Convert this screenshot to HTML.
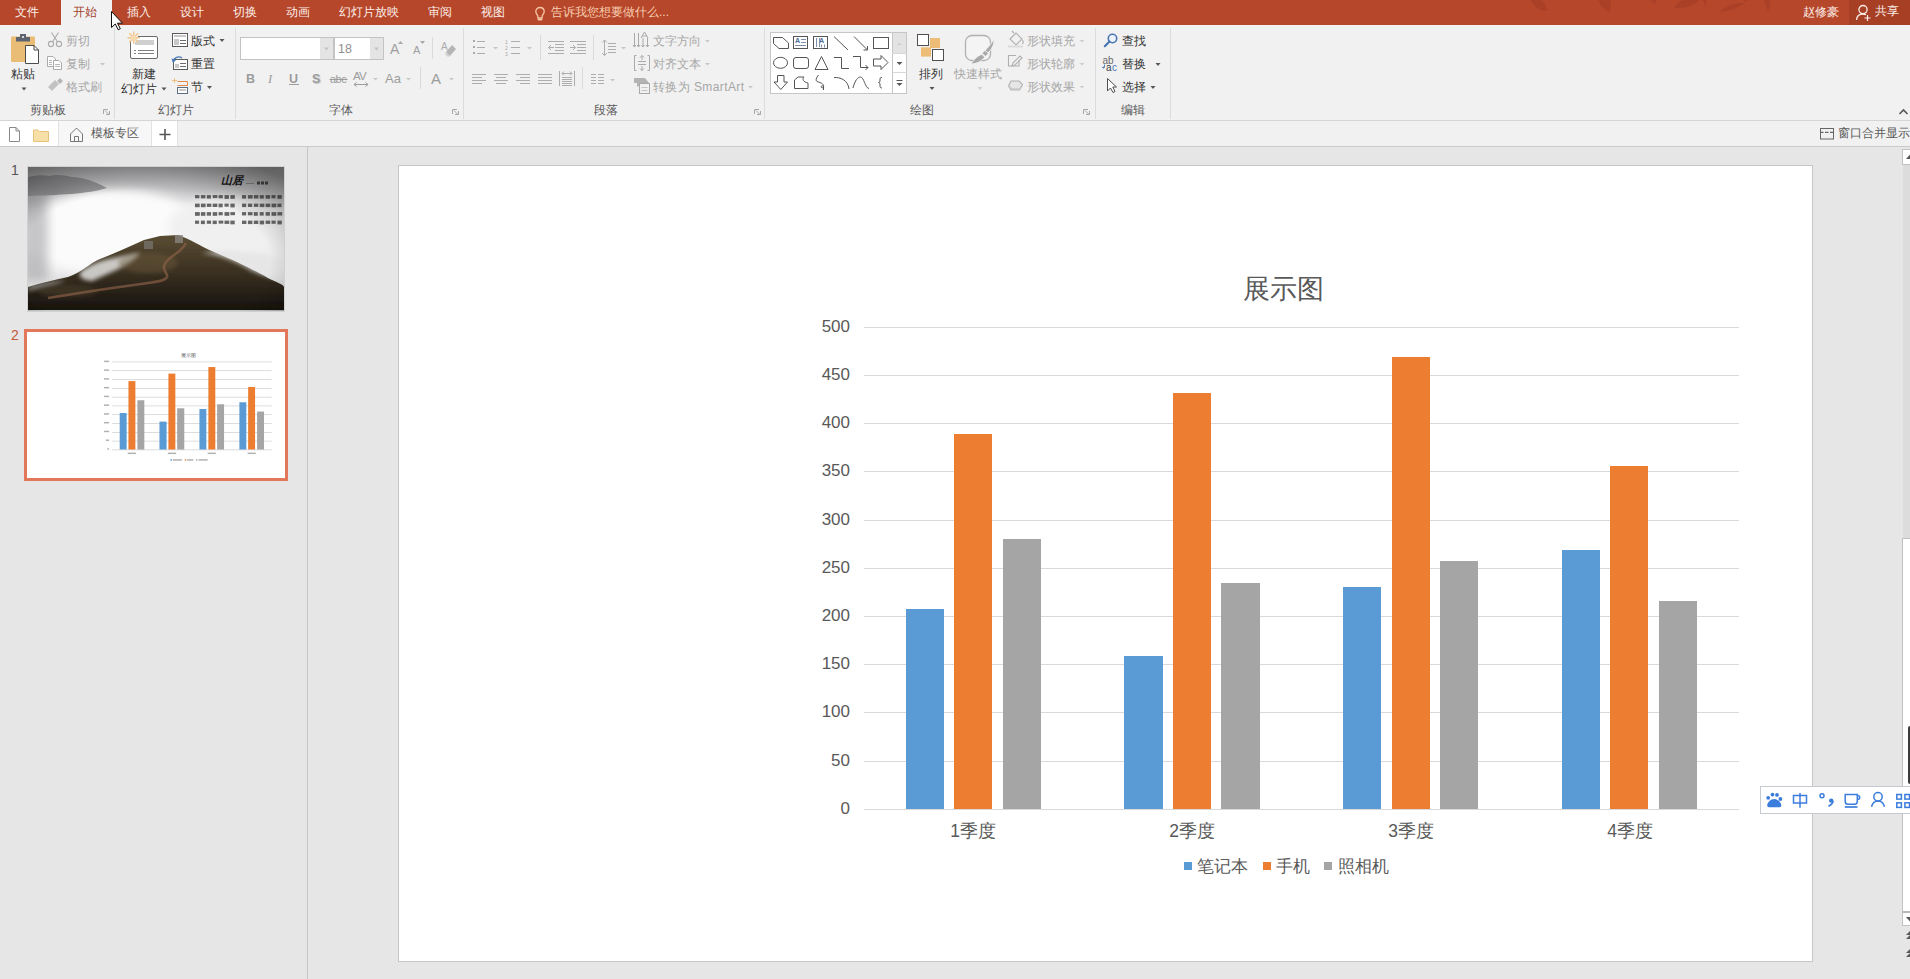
<!DOCTYPE html>
<html><head><meta charset="utf-8">
<style>
*{margin:0;padding:0;box-sizing:border-box}
html,body{width:1910px;height:979px;overflow:hidden;background:#e6e6e6;font-family:"Liberation Sans",sans-serif;position:relative}
.a{position:absolute}
.t{position:absolute;white-space:nowrap;line-height:1}
#title{left:0;top:0;width:1910px;height:25px;background:#b7472a;overflow:hidden}
.tab{position:absolute;top:6px;font-size:12px;color:#fbeee9;line-height:12px;white-space:nowrap}
#ribbon{left:0;top:25px;width:1910px;height:96px;background:#f1f1f1;border-bottom:1px solid #d5d5d5}
.glab{position:absolute;top:104px;font-size:12px;color:#5a5a5a;line-height:12px;white-space:nowrap}
.en{color:#333}
.dis{color:#a6a6a6}
.rt{position:absolute;font-size:12px;line-height:12px;white-space:nowrap}
.ylab{position:absolute;width:60px;text-align:right;font-size:17px;color:#595959;line-height:18px}
.xlab{position:absolute;width:100px;text-align:center;font-size:17.5px;color:#595959;line-height:18px}
.grid{position:absolute;left:864px;width:875px;height:1px;background:#d9d9d9}
.bar{position:absolute;width:38px}
.b1{background:#5b9bd5}.b2{background:#ed7d31}.b3{background:#a5a5a5}

</style></head><body>
<div id="title" class="a">
  <svg class="a" style="left:0;top:0" width="1910" height="25">
    <g fill="#a83f27" opacity="0.85">
      <path d="M1531 0 C1533 6 1540 12 1548 11 C1546 6 1544 2 1541 0Z"/>
      <path d="M1598 0 C1600 5 1604 10 1609 12 C1611 8 1612 3 1610 0Z"/>
      <path d="M1651 0 L1655 5 L1656 0Z"/>
      <path d="M1674 8 C1682 9 1694 6 1700 0 L1682 0 C1678 3 1675 5 1674 8Z"/>
      <path d="M1702 0 L1707 7 L1706 0Z"/>
      <path d="M1720 12 C1730 11 1740 7 1745 3 C1735 3 1725 6 1720 12Z"/>
      <path d="M1745 2 L1748 0 L1744 0Z"/>
      <path d="M1764 0 C1765 5 1767 9 1768 12 C1770 8 1771 3 1770 0Z"/>
    </g>
  </svg>
  <div class="a" style="left:61px;top:0;width:51px;height:25px;background:#f1f1f1"></div>
  <div class="tab" style="left:15px">文件</div>
  <div class="tab" style="left:73px;color:#a1432d">开始</div>
  <div class="tab" style="left:127px">插入</div>
  <div class="tab" style="left:180px">设计</div>
  <div class="tab" style="left:233px">切换</div>
  <div class="tab" style="left:286px">动画</div>
  <div class="tab" style="left:339px">幻灯片放映</div>
  <div class="tab" style="left:428px">审阅</div>
  <div class="tab" style="left:481px">视图</div>
  <svg class="a" style="left:533px;top:4px" width="14" height="18">
    <path d="M7 3.5 C4.5 3.5 2.8 5.3 2.8 7.6 C2.8 9.4 4 10.5 4.8 11.8 V13.8 H9.2 V11.8 C10 10.5 11.2 9.4 11.2 7.6 C11.2 5.3 9.5 3.5 7 3.5Z" fill="none" stroke="#f5c6a5" stroke-width="1.3"/>
    <rect x="4.6" y="14.2" width="4.8" height="2.3" rx="1" fill="#f5c6a5"/>
  </svg>
  <div class="tab" style="left:551px;color:#f6cdb0">告诉我您想要做什么...</div>
  <div class="tab" style="left:1803px">赵修豪</div>
  <div class="a" style="left:1849px;top:0;width:61px;height:25px;background:#a63f24"></div>
  <svg class="a" style="left:1854px;top:3px" width="20" height="20">
    <circle cx="9" cy="6.6" r="4.1" fill="none" stroke="#fbeee9" stroke-width="1.3"/>
    <path d="M2.5 17 C2.8 13.5 5 11 9 11 C10.3 11 11.2 11.3 12 11.8" fill="none" stroke="#fbeee9" stroke-width="1.3"/>
    <path d="M13.5 12 V18 M10.5 15 H16.5" stroke="#fbeee9" stroke-width="1.2"/>
  </svg>
  <div class="tab" style="left:1875px;top:5px">共享</div>
</div>

<div id="ribbon" class="a"></div>
<svg class="a" style="left:0;top:0" width="1910" height="147" viewBox="0 0 1910 147">
<!-- group separators -->
<g fill="#dcdcdc">
<rect x="114" y="28" width="1" height="91"/>
<rect x="235" y="28" width="1" height="91"/>
<rect x="463" y="28" width="1" height="91"/>
<rect x="764" y="28" width="1" height="91"/>
<rect x="1095" y="28" width="1" height="91"/>
<rect x="1170" y="28" width="1" height="91"/>
</g>
<!-- dialog launchers -->
<g fill="none" stroke="#a8a8a8" stroke-width="1">
<path d="M103.5 114 V109.5 H108"/><path d="M105 110.5 L109 114.5 M106 114.5 H109.5 V111"/>
<path d="M452.5 114 V109.5 H457"/><path d="M454 110.5 L458 114.5 M455 114.5 H458.5 V111"/>
<path d="M754.5 114 V109.5 H759"/><path d="M756 110.5 L760 114.5 M757 114.5 H760.5 V111"/>
<path d="M1083.5 114 V109.5 H1088"/><path d="M1085 110.5 L1089 114.5 M1086 114.5 H1089.5 V111"/>
</g>
<!-- collapse ribbon ^ -->
<path d="M1899.5 114 L1903.5 110 L1907.5 114" fill="none" stroke="#555" stroke-width="1.6"/>

<!-- ===== Clipboard ===== -->
<rect x="11" y="36.5" width="24" height="25.5" rx="1" fill="#e9bd75"/>
<rect x="16" y="37" width="14" height="4.5" fill="#5e6570"/>
<rect x="20" y="34" width="6" height="4" fill="#5e6570"/>
<circle cx="23" cy="37" r="1.1" fill="#f1f1f1"/>
<path d="M25.5 45.5 H34 L38.5 50 V63.5 H25.5 Z" fill="#fff" stroke="#4d4d4d"/>
<path d="M34 45.5 V50 H38.5" fill="none" stroke="#4d4d4d"/>
<path d="M21.5 87.5 h5 l-2.5 3z" fill="#555"/>
<!-- scissors -->
<g fill="none" stroke="#ababab" stroke-width="1.1">
<circle cx="51" cy="44" r="2.6"/><circle cx="59" cy="44" r="2.6"/>
<path d="M52.5 41.8 L58.5 32.5 M57.5 41.8 L51.5 32.5"/>
</g>
<!-- copy -->
<g fill="#fff" stroke="#ababab" stroke-width="1">
<path d="M47.5 56.5 H53 L55.5 59 V66.5 H47.5 Z"/>
<path d="M53.5 60.5 H59 L61.5 63 V69.5 H53.5 Z"/>
</g>
<g stroke="#b8b8b8" stroke-width="1"><path d="M49 60.5h3 M49 62.5h3 M49 64.5h3 M55 64.5h5 M55 66.5h5"/></g>
<path d="M100 63 h5 l-2.5 2.5z" fill="#c4c4c4"/>
<!-- format painter -->
<g fill="#c2c2c2">
<path d="M48 87 L55 80 L59 84 L52 91 Z"/>
<path d="M57 81 L60 78 L63 81 L60 84 Z" fill="#b5b5b5"/>
</g>

<!-- ===== Slides ===== -->
<rect x="130.5" y="36.5" width="27" height="22" rx="1.5" fill="#fff" stroke="#6b6b6b"/>
<rect x="135" y="40" width="19" height="5" fill="#cfcfcf"/>
<g stroke="#808080" stroke-width="1"><path d="M134 50.5h2 M138 50.5h16 M134 53.5h2 M138 53.5h16"/></g>
<circle cx="133.7" cy="37.7" r="4.5" fill="#f1f1f1"/>
<g stroke="#f4c489" stroke-width="1.4" stroke-linecap="round">
<path d="M133.7 32 V43.4 M128 37.7 H139.4 M129.7 33.7 L137.7 41.7 M137.7 33.7 L129.7 41.7"/>
</g>
<circle cx="133.7" cy="37.7" r="2.8" fill="#f9d9ae"/>
<path d="M161.5 87.5 h5 l-2.5 3z" fill="#555"/>
<!-- layout -->
<rect x="172.5" y="33.5" width="15" height="13" fill="#fff" stroke="#5a5a5a"/>
<rect x="174" y="35" width="12" height="2" fill="#c8c8c8"/>
<rect x="174" y="39" width="5" height="6" fill="#c8c8c8"/>
<path d="M180 40.5h6 M180 43.5h6" stroke="#6a6a6a"/>
<path d="M219.5 39 h5 l-2.5 3z" fill="#555"/>
<!-- reset -->
<rect x="173.5" y="59.5" width="14" height="10" fill="#fff" stroke="#5a5a5a"/>
<rect x="175" y="64" width="4" height="4" fill="#c8c8c8"/>
<path d="M180 63.5h6 M180 66.5h6" stroke="#6a6a6a"/>
<path d="M173 61.5 C174 57.5 178.5 55.5 182 58" fill="none" stroke="#4a7ab8" stroke-width="1.4"/>
<path d="M171.5 58.5 L173 63 L176 60 Z" fill="#4a7ab8"/>
<!-- section -->
<g stroke="#f0c080" stroke-width="1"><path d="M174.5 78 v5 M172 80.5 h5"/></g>
<path d="M177.5 81.5 H187.5 V85.5 H177.5" fill="none" stroke="#e0894a"/>
<rect x="177.5" y="87.5" width="10" height="6" fill="#fff" stroke="#5a6d85"/>
<rect x="179" y="89" width="7" height="2" fill="#c8c8c8"/>
<path d="M207 86 h5 l-2.5 3z" fill="#555"/>

<!-- ===== Font ===== -->
<rect x="240.5" y="37.5" width="93" height="22" fill="#fff" stroke="#c3c3c3"/>
<rect x="320" y="38" width="13" height="21" fill="#e4e4e4"/>
<path d="M324 47.5 h5 l-2.5 3z" fill="#c4c4c4"/>
<rect x="334.5" y="37.5" width="49" height="22" fill="#fff" stroke="#c3c3c3"/>
<rect x="370" y="38" width="13" height="21" fill="#e4e4e4"/>
<path d="M374 47.5 h5 l-2.5 3z" fill="#c4c4c4"/>
<path d="M398 44 l2.5 -3 l2.5 3z" fill="#a8a8a8"/>
<path d="M420 41 h5 l-2.5 3z" fill="#a8a8a8"/>
<rect x="432" y="37" width="1" height="22" fill="#dadada"/>
<!-- clear formatting -->
<text x="441" y="50" font-family="Liberation Sans" font-size="10" fill="#ababab">A</text>
<path d="M446 52 L452 45 L456 49 L450 56 Z" fill="#b5b5b5"/>
<path d="M446 52 L450 56 L448 57 L445 54 Z" fill="#d0d0d0"/>
<!-- row2 extras -->
<path d="M289 84.5 h10" stroke="#9c9c9c" stroke-width="1"/>
<path d="M329.5 79.5 h18" stroke="#9c9c9c" stroke-width="1"/>
<path d="M354 84.5 h14 M354 84.5 l2.5 -2 M354 84.5 l2.5 2 M368 84.5 l-2.5 -2 M368 84.5 l-2.5 2" stroke="#9c9c9c" stroke-width="1" fill="none"/>
<path d="M373 78 h5 l-2.5 2.5z" fill="#c8c8c8"/>
<path d="M406 78 h5 l-2.5 2.5z" fill="#c8c8c8"/>
<rect x="420" y="67" width="1" height="22" fill="#dadada"/>
<path d="M449 78 h5 l-2.5 2.5z" fill="#c8c8c8"/>

<!-- ===== Paragraph ===== -->
<g fill="#a9a9a9">
<rect x="473" y="40" width="2" height="2"/><rect x="473" y="46" width="2" height="2"/><rect x="473" y="52" width="2" height="2"/>
</g>
<g stroke="#adadad" stroke-width="1">
<path d="M477 41.5h8 M477 47.5h8 M477 53.5h8"/>
<path d="M511 41.5h9 M511 47.5h9 M511 53.5h9"/>
</g>
<text x="505" y="44" font-family="Liberation Sans" font-size="5" fill="#a9a9a9">1</text>
<text x="505" y="50" font-family="Liberation Sans" font-size="5" fill="#a9a9a9">2</text>
<text x="505" y="56" font-family="Liberation Sans" font-size="5" fill="#a9a9a9">3</text>
<path d="M493 47 h5 l-2.5 2.5z" fill="#c8c8c8"/>
<path d="M527 47 h5 l-2.5 2.5z" fill="#c8c8c8"/>
<rect x="540" y="35" width="1" height="25" fill="#dadada"/>
<g stroke="#adadad" stroke-width="1" fill="none">
<path d="M548 41.5h16 M555 44.5h9 M555 47.5h9 M555 50.5h9 M548 53.5h16"/>
<path d="M554 47.5h-5 M551 45 l-2.5 2.5 l2.5 2.5"/>
<path d="M570 41.5h16 M577 44.5h9 M577 47.5h9 M577 50.5h9 M570 53.5h16"/>
<path d="M570 47.5h5 M573 45 l2.5 2.5 l-2.5 2.5"/>
</g>
<rect x="593" y="35" width="1" height="25" fill="#dadada"/>
<g stroke="#adadad" stroke-width="1" fill="none">
<path d="M604.5 40 V55.5 M602 42.5 l2.5 -2.5 l2.5 2.5 M602 53 l2.5 2.5 l2.5 -2.5"/>
<path d="M608 43.5h8 M608 46.5h8 M608 49.5h8 M608 52.5h8"/>
</g>
<path d="M621 47 h5 l-2.5 2.5z" fill="#c8c8c8"/>
<g stroke="#adadad" stroke-width="1" fill="none">
<path d="M472 74.5h14 M472 77.5h10 M472 80.5h14 M472 83.5h10"/>
<path d="M494 74.5h14 M496 77.5h10 M494 80.5h14 M496 83.5h10"/>
<path d="M516 74.5h14 M520 77.5h10 M516 80.5h14 M520 83.5h10"/>
<path d="M538 74.5h14 M538 77.5h14 M538 80.5h14 M538 83.5h14"/>
<path d="M559.5 71 V86 M574.5 71 V86 M562 73.5h10 M562 73.5 l2 -2 M562 73.5 l2 2 M572 73.5 l-2 -2 M572 73.5 l-2 2 M562 77.5h10 M562 79.5h10 M562 81.5h10 M562 83.5h10 M562 85.5h10"/>
</g>
<rect x="582" y="67" width="1" height="22" fill="#dadada"/>
<g stroke="#adadad" stroke-width="1"><path d="M591 74.5h5 M598 74.5h6 M591 77.5h5 M598 77.5h6 M591 80.5h5 M598 80.5h6 M591 83.5h5 M598 83.5h6"/></g>
<path d="M610 79 h5 l-2.5 2.5z" fill="#c8c8c8"/>
<!-- text direction -->
<g stroke="#a9a9a9" stroke-width="1" fill="none">
<path d="M634.5 33 V47 M638.5 33 V47 M643 38 V47 M647.5 38 V47"/>
<path d="M633 45 l1.5 2 l1.5 -2 M637 45 l1.5 2 l1.5 -2 M641.5 45 l1.5 2 l1.5 -2 M646 45 l1.5 2 l1.5 -2"/>
<path d="M641 38 L644.5 32 L648 38 M642 36 h5"/>
</g>
<path d="M705 40 h5 l-2.5 2.5z" fill="#c8c8c8"/>
<!-- align text -->
<g stroke="#a9a9a9" stroke-width="1" fill="none">
<path d="M636.5 55.5 h-2 V70.5 h2 M647.5 55.5 h2 V70.5 h-2"/>
<path d="M642 55.5 V60 M640 57.5 l2 -2 l2 2 M642 66 V70.5 M640 68.5 l2 2 l2 -2 M638 61.5h8 M638 64.5h8"/>
</g>
<path d="M705 63 h5 l-2.5 2.5z" fill="#c8c8c8"/>
<!-- smartart -->
<path d="M634 78 H645 L649 83 H640 V85 L637 87 V83 H634 Z" fill="#b3b3b3"/>
<rect x="639.5" y="83.5" width="10" height="10" fill="#f1f1f1" stroke="#a9a9a9"/>
<path d="M641.5 87.5h6 M641.5 90.5h6" stroke="#c4c4c4"/>
<path d="M748 86 h5 l-2.5 2.5z" fill="#c8c8c8"/>

<!-- ===== Drawing ===== -->
<rect x="770.5" y="32.5" width="136" height="61" fill="#fff" stroke="#c6c6c6"/>
<rect x="892.5" y="32.5" width="14" height="61" fill="#fff" stroke="#c6c6c6"/>
<rect x="893" y="33" width="13" height="20.5" fill="#e3e3e3"/>
<path d="M892.5 53.5 h14 M892.5 72.5 h14" stroke="#d8d8d8"/>
<path d="M897.5 45 l2 -2 l2 2z" fill="#c8c8c8"/>
<path d="M896.5 62 h6 l-3 3z" fill="#555"/>
<path d="M896.5 80.5 h6" stroke="#555"/><path d="M896.5 83 h6 l-3 3z" fill="#555"/>
<g fill="none" stroke="#555" stroke-width="1">
<path d="M773.5 37.5 H782.5 L788.5 43 V48.5 H779 L773.5 43.5 Z"/>
<rect x="793.5" y="36.5" width="14" height="12"/>
<rect x="813.5" y="36.5" width="14" height="12"/>
<path d="M834 36.5 L848 50"/>
<path d="M854 36.5 L867.5 50 M863.5 50 H867.5 V46"/>
<rect x="873.5" y="37.5" width="15" height="11"/>
<ellipse cx="780.5" cy="62.8" rx="7" ry="5.5"/>
<rect x="793.5" y="57.5" width="15" height="11" rx="2.5"/>
<path d="M821.5 56.5 L828 69.5 H815 Z"/>
<path d="M834 57.5 H841.5 V68.5 H849"/>
<path d="M853 56.5 H860.5 V67.5 H868 M865.5 65 L868 67.5 L865.5 70"/>
<path d="M873.5 59 H881 V55.5 L888 62.5 L881 69.5 V66 H873.5 Z"/>
<path d="M777.5 75.5 H784 V82 H787.5 L780.8 89.5 L774 82 H777.5 Z"/>
<path d="M794.5 88.5 V80 L798 77 H804 C802 79 803 82 808 83 V88.5 Z"/>
<path d="M818.5 75 C816 78 815.5 80.5 817 81.5 C819 82.5 822 82.5 823 84.5 C824.5 87 823 88.5 821.5 87.5 C820.5 86.5 822 85 823.5 86 L823.5 90"/>
<path d="M834 77.5 C840 77 848 80 849 89"/>
<path d="M853 88 C855 80 858 77 860.5 77 C864 77 865 88 869 88.5"/>
<path d="M882 77.5 C880 77.5 880 78 880 80 C880 82 879.5 82.5 878.5 82.5 C879.5 82.5 880 83 880 85 C880 87 880 88 882 88"/>
</g>
<g fill="#4b6a9b"><text x="795" y="43" font-family="Liberation Sans" font-size="7" font-weight="bold">A</text><text x="819" y="43" font-family="Liberation Sans" font-size="7" font-weight="bold">A</text></g>
<g stroke="#7d8ea8" stroke-width="1"><path d="M801 39.5h5 M801 42.5h5 M795 45.5h11 M816.5 38v9 M819.5 38v9 M821.5 44.5v3 M824.5 44.5v3"/></g>
<!-- arrange -->
<rect x="930" y="38" width="10" height="10" fill="#edbd78"/>
<rect x="921" y="47.3" width="10" height="9.3" fill="#edbd78"/>
<rect x="917.5" y="34.5" width="11" height="11" fill="#fff" stroke="#4f4f4f"/>
<rect x="932.5" y="49.5" width="11" height="11" fill="#fff" stroke="#4f4f4f"/>
<path d="M929.5 87 h5 l-2.5 3z" fill="#555"/>
<!-- quick styles -->
<rect x="965.5" y="35.5" width="25" height="25" rx="6.5" fill="#f4f4f4" stroke="#b0b0b0" stroke-width="1.3"/>
<g fill="#a9a9a9" stroke="#f1f1f1" stroke-width="1.4" paint-order="stroke">
<path d="M993.6 40.3 C993.5 45 991.5 49 988 52.5 L985.5 50.5 C989 47 992 43.5 993.6 40.3Z"/>
<path d="M985 50.8 L988 53.5 L985.5 56 L982.5 53.3Z"/>
<path d="M982 54.8 C977 56.5 974 60 971.6 63.6 C976 63.4 980.5 61.5 984.3 57.3Z"/>
</g>
<path d="M977.5 87 h5 l-2.5 3z" fill="#cfcfcf"/>
<!-- shape fill/outline/effects -->
<g fill="none" stroke="#b0b0b0" stroke-width="1.1">
<path d="M1010 39 L1016 33 L1022 39 L1016 45 Z"/>
<path d="M1014 33 L1012 31"/>
<path d="M1022.5 40 C1023.5 42 1023.5 43 1022.5 44"/>
</g>
<rect x="1008" y="45.5" width="15" height="2" fill="#dcdcdc"/>
<path d="M1079.5 40 h5 l-2.5 2.5z" fill="#cfcfcf"/>
<g fill="none" stroke="#b0b0b0" stroke-width="1.1">
<path d="M1016 55.5 H1008.5 V66 H1019 V60"/>
<path d="M1013 63 L1020 56 L1022 58 L1015 65 L1012 66 Z"/>
</g>
<path d="M1079.5 63 h5 l-2.5 2.5z" fill="#cfcfcf"/>
<path d="M1011 81 H1019 L1022.5 84.5 L1019.5 90 H1011 L1008.5 86 Z" fill="#e6e6e6" stroke="#b0b0b0" stroke-width="1.1"/>
<path d="M1008.5 86 L1012 89 H1019.5" fill="none" stroke="#c8c8c8" stroke-width="1.5"/>
<path d="M1079.5 86 h5 l-2.5 2.5z" fill="#cfcfcf"/>

<!-- ===== Editing ===== -->
<circle cx="1112.5" cy="38.5" r="4.2" fill="#eef4fb" stroke="#4a76b4" stroke-width="1.6"/>
<path d="M1109.5 41.5 L1104.8 46.2" stroke="#4a76b4" stroke-width="2.2" stroke-linecap="round"/>
<text x="1102.5" y="63.5" font-family="Liberation Sans" font-size="10" fill="#6a6a6a">ab</text>
<text x="1106" y="70.5" font-family="Liberation Sans" font-size="10" fill="#3c3c3c">a</text>
<text x="1112" y="70.5" font-family="Liberation Sans" font-size="10" fill="#4a76b4">c</text>
<path d="M1104.5 64.5 V67.5 H1102.5 M1103.5 66.5 L1102.5 67.5 L1103.5 68.5" fill="none" stroke="#4a76b4" stroke-width="0.9"/>
<path d="M1155.5 63 h5 l-2.5 3z" fill="#555"/>
<path d="M1107.5 78.5 V91 L1110.5 88 L1113 92.5 L1115 91.5 L1112.8 87 H1116.5 Z" fill="#fff" stroke="#4f4f4f" stroke-width="1"/>
<path d="M1150.5 86 h5 l-2.5 3z" fill="#555"/>

</svg>
<div class="glab" style="left:30px">剪贴板</div>
<div class="glab" style="left:158px">幻灯片</div>
<div class="glab" style="left:329px">字体</div>
<div class="glab" style="left:594px">段落</div>
<div class="glab" style="left:910px">绘图</div>
<div class="glab" style="left:1121px">编辑</div>
<div class="rt en" style="left:11px;top:68px">粘贴</div>
<div class="rt dis" style="left:66px;top:35px">剪切</div>
<div class="rt dis" style="left:66px;top:58px">复制</div>
<div class="rt dis" style="left:66px;top:81px">格式刷</div>
<div class="rt en" style="left:132px;top:68px">新建</div>
<div class="rt en" style="left:121px;top:83px">幻灯片</div>
<div class="rt en" style="left:191px;top:35px">版式</div>
<div class="rt en" style="left:191px;top:58px">重置</div>
<div class="rt en" style="left:191px;top:81px">节</div>
<div class="rt" style="left:338px;top:43px;font-size:12.5px;color:#8f8f8f;line-height:13px">18</div>
<div class="rt dis" style="left:653px;top:35px">文字方向</div>
<div class="rt dis" style="left:653px;top:58px">对齐文本</div>
<div class="rt dis" style="left:653px;top:81px;letter-spacing:0.4px">转换为 SmartArt</div>
<div class="rt en" style="left:919px;top:68px">排列</div>
<div class="rt dis" style="left:954px;top:68px">快速样式</div>
<div class="rt dis" style="left:1027px;top:35px">形状填充</div>
<div class="rt dis" style="left:1027px;top:58px">形状轮廓</div>
<div class="rt dis" style="left:1027px;top:81px">形状效果</div>
<div class="rt en" style="left:1122px;top:35px">查找</div>
<div class="rt en" style="left:1122px;top:58px">替换</div>
<div class="rt en" style="left:1122px;top:81px">选择</div>
<div class="rt" style="left:390px;top:42px;font-size:14px;line-height:14px;color:#a0a0a0">A</div>
<div class="rt" style="left:413px;top:45px;font-size:11px;line-height:11px;color:#a0a0a0">A</div>
<div class="rt" style="left:246px;top:73px;font-size:12.5px;line-height:13px;color:#9c9c9c;font-weight:bold">B</div>
<div class="rt" style="left:268px;top:73px;font-size:12.5px;line-height:13px;color:#9c9c9c;font-style:italic;font-family:'Liberation Serif',serif">I</div>
<div class="rt" style="left:289px;top:73px;font-size:12.5px;line-height:13px;color:#9c9c9c;font-weight:bold">U</div>
<div class="rt" style="left:312px;top:73px;font-size:12.5px;line-height:13px;color:#9c9c9c;font-weight:bold;text-shadow:1px 1px 1px #c8c8c8">S</div>
<div class="rt" style="left:330px;top:74px;font-size:11px;line-height:11px;color:#9c9c9c;letter-spacing:-0.5px">abc</div>
<div class="rt" style="left:353px;top:71px;font-size:11.5px;line-height:11px;color:#9c9c9c;letter-spacing:-0.8px">AV</div>
<div class="rt" style="left:385px;top:72px;font-size:13px;line-height:13px;color:#9c9c9c">Aa</div>
<div class="rt" style="left:431px;top:71px;font-size:15px;line-height:15px;color:#9c9c9c">A</div>

<!-- QUICK ACCESS -->
<div class="a" style="left:0;top:121px;width:1910px;height:26px;background:#f1f1f1;border-bottom:1px solid #c9c9c9"></div>
<div class="a" style="left:0;top:121px;width:58px;height:25px;background:#fff"></div>
<div class="a" style="left:58px;top:121px;width:94px;height:25px;background:#f7f7f7;border-left:1px solid #e2e2e2;border-right:1px solid #e2e2e2"></div>
<div class="a" style="left:152px;top:121px;width:26px;height:25px;background:#fff;border-right:1px solid #e2e2e2"></div>
<svg class="a" style="left:0;top:121px" width="200" height="25">
  <path d="M9.5 6.5 H16 L19.5 10 V20.5 H9.5 Z M16 6.5 V10 H19.5" fill="#fff" stroke="#8a8a8a"/>
  <path d="M33.5 9 H38 L39.5 10.5 H48.5 V20.5 H33.5 Z" fill="#f7dfa8" stroke="#e8c27a"/>
  <path d="M70.5 20.5 V13 L76.5 7 L82.5 13 V20.5 Z M74.5 20.5 V15.5 H78.5 V20.5" fill="none" stroke="#777"/>
  <path d="M165 8 V19 M159.5 13.5 H170.5" stroke="#555" stroke-width="1.6"/>
</svg>
<div class="rt" style="left:91px;top:127px;color:#5a5a5a">模板专区</div>
<svg class="a" style="left:1818px;top:126px" width="18" height="14">
  <rect x="2.5" y="2.5" width="13" height="10.5" fill="none" stroke="#666"/>
  <path d="M2.5 6.3 h3 M7 6.3 h3.5 M12 6.3 h3.5" stroke="#666" stroke-width="1.3"/>
</svg>
<div class="rt" style="left:1838px;top:127px;color:#5a5a5a">窗口合并显示</div>

<!-- LEFT PANE -->
<div class="a" style="left:307px;top:147px;width:1px;height:832px;background:#c6c6c6"></div>
<div class="rt" style="left:11px;top:163px;font-size:14px;line-height:14px;color:#555">1</div>
<div class="rt" style="left:11px;top:328px;font-size:14px;line-height:14px;color:#c4593a">2</div>

<!-- thumbnail 1 -->
<div class="a" style="left:27px;top:166px;width:258px;height:146px;background:#fff;border:1px solid #d0d0d0"></div>
<svg class="a" style="left:28px;top:167px" width="256" height="144" viewBox="0 0 256 144">
  <defs>
    <linearGradient id="sky" x1="0" y1="0" x2="0" y2="1">
      <stop offset="0" stop-color="#a6a6a8"/>
      <stop offset="0.16" stop-color="#c6c6c8"/>
      <stop offset="0.32" stop-color="#ededee"/>
      <stop offset="0.7" stop-color="#ececec"/>
      <stop offset="1" stop-color="#c8c8c8"/>
    </linearGradient>
    <radialGradient id="vig" cx="0.45" cy="0.66" r="0.8">
      <stop offset="0.62" stop-color="#000" stop-opacity="0"/>
      <stop offset="1" stop-color="#000" stop-opacity="0.42"/>
    </radialGradient>
    <linearGradient id="mtn" x1="0" y1="0" x2="0" y2="1">
      <stop offset="0" stop-color="#5a4c33"/>
      <stop offset="0.45" stop-color="#3d3323"/>
      <stop offset="1" stop-color="#17130e"/>
    </linearGradient>
    <filter id="bl" x="-50%" y="-50%" width="200%" height="200%"><feGaussianBlur stdDeviation="5"/></filter>
    <filter id="bl2" x="-50%" y="-50%" width="200%" height="200%"><feGaussianBlur stdDeviation="2"/></filter>
    <filter id="bl1" x="-50%" y="-50%" width="200%" height="200%"><feGaussianBlur stdDeviation="0.6"/></filter>
  </defs>
  <rect width="256" height="144" fill="url(#sky)"/>
  <ellipse cx="85" cy="65" rx="95" ry="42" fill="#fbfbfb" filter="url(#bl)"/>
  <ellipse cx="200" cy="60" rx="60" ry="30" fill="#f0f0f0" filter="url(#bl)"/>
  <path d="M0 10 C8 8 16 8 22 9 C28 7 36 8 44 10 C56 10 68 15 79 21 C60 27 30 28 0 29 Z" fill="#7e7e82" opacity="0.75" filter="url(#bl1)"/><rect x="-6" y="24" width="26" height="90" fill="#9c9ca0" opacity="0.55" filter="url(#bl)"/>
  <path d="M0 143 V120 C12 116 26 113 40 110 C54 105 62 96 72 92 C88 86 102 79 116 73 L132 69 L150 68 C162 72 172 79 186 85 C206 93 226 103 240 111 C248 115 256 118 256 120 V143 Z" fill="url(#mtn)" filter="url(#bl1)"/>
  <path d="M58 101 C72 92 92 90 112 86 C106 96 86 104 64 114 C50 113 48 106 58 101Z" fill="#ededed" opacity="0.8" filter="url(#bl2)"/>
  <path d="M0 120 C10 116 25 114 38 113 C30 118 15 121 0 124Z" fill="#dcdcdc" opacity="0.5" filter="url(#bl2)"/>
  <path d="M174 86 C192 88 207 94 222 103 C230 107 242 111 256 113 V92 C236 88 202 80 174 86Z" fill="#e4e4e4" opacity="0.7" filter="url(#bl2)"/>
  <ellipse cx="120" cy="96" rx="30" ry="10" fill="#6e5c3c" opacity="0.45" filter="url(#bl2)"/><ellipse cx="40" cy="124" rx="30" ry="6" fill="#4a3e2a" opacity="0.6" filter="url(#bl2)"/><path d="M20 131 C50 126 90 120 120 116 C135 114 142 112 138 106 C134 100 135 96 146 88 C152 84 156 80 158 76" fill="none" stroke="#8e6248" stroke-width="2.6" opacity="0.65" filter="url(#bl1)"/>
  <rect x="116" y="74" width="9" height="8" fill="#76726c" opacity="0.8"/>
  <rect x="147" y="68" width="8" height="8" fill="#8a8580" opacity="0.8"/>
  <rect width="256" height="144" fill="url(#vig)"/>
  <text x="193" y="17.3" font-family="Liberation Serif" font-size="11" font-weight="bold" font-style="italic" fill="#111">山居</text>
  <rect x="218" y="16" width="8" height="0.8" fill="#333" opacity="0.5"/>
  <g fill="#222" opacity="0.8"><rect x="229" y="14.5" width="3" height="3"/><rect x="233" y="14.5" width="3" height="3"/><rect x="237" y="14.5" width="3" height="3"/></g>
  <g fill="#141414" opacity="0.62">
    <rect x="167.0" y="28.1" width="4.4" height="3.2"/><rect x="172.9" y="28.1" width="4.5" height="3.3"/><rect x="178.8" y="28.1" width="4.1" height="3.5"/><rect x="184.7" y="28.1" width="4.7" height="3.0"/><rect x="190.6" y="28.1" width="4.2" height="3.2"/><rect x="196.5" y="28.1" width="4.4" height="3.8"/><rect x="202.4" y="28.1" width="4.4" height="3.7"/><rect x="214.0" y="28.1" width="4.1" height="3.5"/><rect x="219.9" y="28.1" width="4.7" height="3.5"/><rect x="225.8" y="28.1" width="4.6" height="3.4"/><rect x="231.7" y="28.1" width="4.1" height="3.5"/><rect x="237.6" y="28.1" width="4.5" height="3.6"/><rect x="243.5" y="28.1" width="4.0" height="3.2"/><rect x="249.4" y="28.1" width="4.4" height="3.7"/><rect x="167.0" y="36.6" width="4.7" height="3.6"/><rect x="172.9" y="36.6" width="4.7" height="3.6"/><rect x="178.8" y="36.6" width="4.6" height="3.3"/><rect x="184.7" y="36.6" width="4.7" height="3.4"/><rect x="190.6" y="36.6" width="4.1" height="3.7"/><rect x="196.5" y="36.6" width="4.2" height="3.1"/><rect x="202.4" y="36.6" width="4.3" height="3.8"/><rect x="214.0" y="36.6" width="4.2" height="3.5"/><rect x="219.9" y="36.6" width="4.3" height="3.4"/><rect x="225.8" y="36.6" width="4.5" height="3.3"/><rect x="231.7" y="36.6" width="4.7" height="3.5"/><rect x="237.6" y="36.6" width="4.7" height="3.5"/><rect x="243.5" y="36.6" width="4.8" height="3.7"/><rect x="249.4" y="36.6" width="4.1" height="3.5"/><rect x="167.0" y="45.1" width="4.8" height="3.7"/><rect x="172.9" y="45.1" width="4.5" height="3.7"/><rect x="178.8" y="45.1" width="4.2" height="3.6"/><rect x="184.7" y="45.1" width="4.5" height="3.7"/><rect x="190.6" y="45.1" width="4.1" height="3.2"/><rect x="196.5" y="45.1" width="4.8" height="3.7"/><rect x="202.4" y="45.1" width="4.6" height="3.1"/><rect x="214.0" y="45.1" width="4.1" height="3.3"/><rect x="219.9" y="45.1" width="4.6" height="3.2"/><rect x="225.8" y="45.1" width="4.0" height="3.7"/><rect x="231.7" y="45.1" width="4.0" height="3.5"/><rect x="237.6" y="45.1" width="4.3" height="3.6"/><rect x="243.5" y="45.1" width="4.8" height="3.7"/><rect x="249.4" y="45.1" width="4.8" height="3.4"/><rect x="167.0" y="53.6" width="4.1" height="3.2"/><rect x="172.9" y="53.6" width="4.0" height="3.5"/><rect x="178.8" y="53.6" width="4.3" height="3.2"/><rect x="184.7" y="53.6" width="4.1" height="3.5"/><rect x="190.6" y="53.6" width="4.7" height="3.0"/><rect x="196.5" y="53.6" width="4.8" height="3.3"/><rect x="202.4" y="53.6" width="4.3" height="3.7"/><rect x="214.0" y="53.6" width="4.4" height="3.4"/><rect x="219.9" y="53.6" width="4.5" height="3.5"/><rect x="225.8" y="53.6" width="4.5" height="3.4"/><rect x="231.7" y="53.6" width="4.4" height="3.8"/><rect x="237.6" y="53.6" width="4.6" height="3.3"/><rect x="243.5" y="53.6" width="4.2" height="3.2"/><rect x="249.4" y="53.6" width="4.4" height="3.8"/>
  </g>
</svg>

<!-- thumbnail 2 (selected) -->
<div class="a" style="left:24px;top:329px;width:264px;height:152px;border:3px solid #e2775a;background:#fff"></div>
<svg class="a" style="left:27px;top:332px" width="258" height="146" viewBox="398 165 1414 800">
  <text x="1283" y="300" font-size="26" text-anchor="middle" fill="#595959" font-family="Liberation Sans">展示图</text>
  <g fill="#d0d0d0">
    <rect x="864" y="327" width="875" height="4"/><rect x="864" y="375" width="875" height="4"/><rect x="864" y="423" width="875" height="4"/>
    <rect x="864" y="472" width="875" height="4"/><rect x="864" y="520" width="875" height="4"/><rect x="864" y="568" width="875" height="4"/>
    <rect x="864" y="616" width="875" height="4"/><rect x="864" y="664" width="875" height="4"/><rect x="864" y="713" width="875" height="4"/>
    <rect x="864" y="761" width="875" height="4"/><rect x="864" y="809" width="875" height="4"/>
  </g>
  <g fill="#b0b0b0">
    <rect x="820" y="322" width="28" height="8"/><rect x="820" y="370" width="28" height="8"/><rect x="820" y="418" width="28" height="8"/>
    <rect x="820" y="466" width="28" height="8"/><rect x="820" y="514" width="28" height="8"/><rect x="820" y="562" width="28" height="8"/>
    <rect x="820" y="610" width="28" height="8"/><rect x="820" y="658" width="28" height="8"/><rect x="820" y="706" width="28" height="8"/>
    <rect x="830" y="754" width="18" height="8"/><rect x="838" y="802" width="10" height="8"/>
    <rect x="950" y="826" width="45" height="8"/><rect x="1170" y="826" width="45" height="8"/><rect x="1388" y="826" width="45" height="8"/><rect x="1607" y="826" width="45" height="8"/>
    <rect x="1197" y="862" width="50" height="8"/><rect x="1276" y="862" width="34" height="8"/><rect x="1338" y="862" width="50" height="8"/>
  </g>
  <rect x="1184" y="862" width="8" height="8" fill="#5b9bd5"/><rect x="1263" y="862" width="8" height="8" fill="#ed7d31"/><rect x="1324" y="862" width="8" height="8" fill="#a5a5a5"/>
  <g id="tb"><rect x="906" y="609" width="38" height="200" fill="#5b9bd5"/><rect x="954" y="434" width="38" height="375" fill="#ed7d31"/><rect x="1003" y="539" width="38" height="270" fill="#a5a5a5"/><rect x="1124" y="656" width="39" height="153" fill="#5b9bd5"/><rect x="1173" y="393" width="38" height="416" fill="#ed7d31"/><rect x="1221" y="583" width="39" height="226" fill="#a5a5a5"/><rect x="1343" y="587" width="38" height="222" fill="#5b9bd5"/><rect x="1392" y="357" width="38" height="452" fill="#ed7d31"/><rect x="1440" y="561" width="38" height="248" fill="#a5a5a5"/><rect x="1562" y="550" width="38" height="259" fill="#5b9bd5"/><rect x="1610" y="466" width="38" height="343" fill="#ed7d31"/><rect x="1659" y="601" width="38" height="208" fill="#a5a5a5"/></g>
</svg>

<!-- SLIDE -->
<div class="a" style="left:398px;top:165px;width:1415px;height:797px;background:#fff;border:1px solid #c6c6c6"></div>

<!-- right scrollbar -->
<div class="a" style="left:1902px;top:149px;width:8px;height:16px;background:#fff;border:1px solid #c2c2c2;border-right:none"></div>
<svg class="a" style="left:1902px;top:149px" width="8" height="16"><path d="M4 10 L8 5.5 V10 Z" fill="#555"/></svg>
<div class="a" style="left:1903px;top:165px;width:7px;height:373px;background:#dcdcdc"></div>
<div class="a" style="left:1902px;top:538px;width:8px;height:374px;background:#fff;border:1px solid #c2c2c2;border-right:none"></div>
<div class="a" style="left:1908px;top:726px;width:2px;height:58px;background:#3c3c3c;border-radius:2px 0 0 2px"></div>
<div class="a" style="left:1902px;top:911px;width:8px;height:15px;background:#fff;border:1px solid #c2c2c2;border-right:none;border-top:2px solid #b8b8b8"></div>
<svg class="a" style="left:1902px;top:911px" width="8" height="15"><path d="M4 6 L8 10.5 V6 Z" fill="#555"/></svg>
<svg class="a" style="left:1902px;top:926px" width="8" height="36">
  <path d="M4 9 L8 5 V9 Z M4 13 L8 9 V13 Z" fill="#5a5a5a"/>
  <path d="M4 27 L8 23 V27 Z M4 31 L8 27 V31 Z" fill="#5a5a5a"/>
</svg>

<!-- IME toolbar -->
<div class="a" style="left:1760px;top:786px;width:150px;height:28px;background:#fff;border:1px solid #c4c9d2;border-right:none"></div>
<svg class="a" style="left:1760px;top:786px" width="150" height="28">
  <g fill="#3b7ddd">
    <circle cx="8.2" cy="11.8" r="1.9"/><circle cx="12.5" cy="8.6" r="1.9"/><circle cx="17" cy="8.9" r="1.9"/><circle cx="20.4" cy="13" r="1.9"/>
    <path d="M7.2 19.5 C7.2 16.5 10.5 13 14.2 13 C18 13 21.3 16.5 21.3 19.5 C21.3 21.5 19.5 21.3 17.5 21.3 H11 C9 21.3 7.2 21.5 7.2 19.5Z"/>
  </g>
  <g fill="none" stroke="#3b7ddd" stroke-width="1.5">
    <rect x="33.5" y="9.5" width="13" height="7.5"/><path d="M40 7 V21.8"/>
    <circle cx="62" cy="9.8" r="2"/>
    <path d="M85.2 8.6 H97.3 V15.5 C97.3 17.5 96 18.3 94.5 18.3 H88 C86.5 18.3 85.2 17.5 85.2 15.5 Z"/>
    <path d="M97.3 9.5 C100.5 9.5 100.5 13.5 97.3 13.5"/>
    <path d="M84.8 21 H97.5" stroke-width="1.7"/>
    <circle cx="118" cy="10.8" r="4.2"/><path d="M111.5 20.8 C112.5 16.8 115 14.9 118 14.9 C121 14.9 123.5 16.8 124.5 20.8"/>
    <rect x="136.8" y="8.5" width="4.6" height="4.6"/><rect x="136.8" y="16.8" width="4.6" height="4.6"/><rect x="144.9" y="8.5" width="4.6" height="4.6"/><rect x="144.9" y="16.8" width="4.6" height="4.6"/>
  </g>
  <circle cx="71.2" cy="14.6" r="2.2" fill="#3b7ddd"/>
  <path d="M73 15 C72.8 17.5 71 19 68.5 20.2" fill="none" stroke="#3b7ddd" stroke-width="1.8"/>
</svg>

<!-- mouse cursor -->
<svg class="a" style="left:110px;top:10px" width="14" height="22">
  <path d="M1.5 1.5 V17.5 L5.3 14 L8.2 19.8 L10.3 18.8 L7.5 13.2 H12.5 Z" fill="#fff" stroke="#111" stroke-width="1"/>
</svg>

<div class="grid" style="top:809px"></div>
<div class="ylab" style="left:790px;top:800px">0</div>
<div class="grid" style="top:761px"></div>
<div class="ylab" style="left:790px;top:752px">50</div>
<div class="grid" style="top:712px"></div>
<div class="ylab" style="left:790px;top:703px">100</div>
<div class="grid" style="top:664px"></div>
<div class="ylab" style="left:790px;top:655px">150</div>
<div class="grid" style="top:616px"></div>
<div class="ylab" style="left:790px;top:607px">200</div>
<div class="grid" style="top:568px"></div>
<div class="ylab" style="left:790px;top:559px">250</div>
<div class="grid" style="top:520px"></div>
<div class="ylab" style="left:790px;top:511px">300</div>
<div class="grid" style="top:471px"></div>
<div class="ylab" style="left:790px;top:462px">350</div>
<div class="grid" style="top:423px"></div>
<div class="ylab" style="left:790px;top:414px">400</div>
<div class="grid" style="top:375px"></div>
<div class="ylab" style="left:790px;top:366px">450</div>
<div class="grid" style="top:327px"></div>
<div class="ylab" style="left:790px;top:318px">500</div>
<div class="bar b1" style="left:906px;width:38px;top:609px;height:200px"></div>
<div class="bar b2" style="left:954px;width:38px;top:434px;height:375px"></div>
<div class="bar b3" style="left:1003px;width:38px;top:539px;height:270px"></div>
<div class="xlab" style="left:923px;top:822px">1季度</div>
<div class="bar b1" style="left:1124px;width:39px;top:656px;height:153px"></div>
<div class="bar b2" style="left:1173px;width:38px;top:393px;height:416px"></div>
<div class="bar b3" style="left:1221px;width:39px;top:583px;height:226px"></div>
<div class="xlab" style="left:1142px;top:822px">2季度</div>
<div class="bar b1" style="left:1343px;width:38px;top:587px;height:222px"></div>
<div class="bar b2" style="left:1392px;width:38px;top:357px;height:452px"></div>
<div class="bar b3" style="left:1440px;width:38px;top:561px;height:248px"></div>
<div class="xlab" style="left:1361px;top:822px">3季度</div>
<div class="bar b1" style="left:1562px;width:38px;top:550px;height:259px"></div>
<div class="bar b2" style="left:1610px;width:38px;top:466px;height:343px"></div>
<div class="bar b3" style="left:1659px;width:38px;top:601px;height:208px"></div>
<div class="xlab" style="left:1580px;top:822px">4季度</div>
<div class="a b1" style="left:1184px;top:862px;width:8px;height:8px"></div>
<div class="t" style="left:1197px;top:858px;font-size:17px;color:#595959">笔记本</div>
<div class="a b2" style="left:1263px;top:862px;width:8px;height:8px"></div>
<div class="t" style="left:1276px;top:858px;font-size:17px;color:#595959">手机</div>
<div class="a b3" style="left:1324px;top:862px;width:8px;height:8px"></div>
<div class="t" style="left:1338px;top:858px;font-size:17px;color:#595959">照相机</div>
<div class="t" style="left:1243px;top:276px;font-size:26.5px;color:#595959">展示图</div>
</body></html>
